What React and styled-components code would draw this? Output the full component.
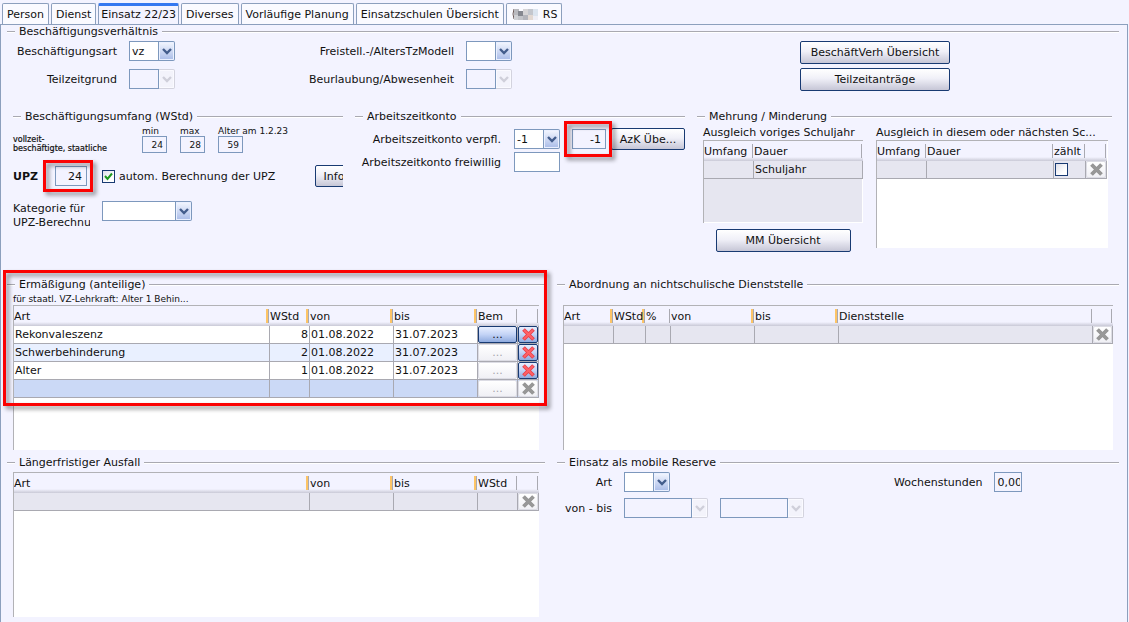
import React from "react";
import styled, { createGlobalStyle, css } from "styled-components";

const c = {
  bg: "#f3f3ff",
  text: "#111111",
  line: "#a9a9b1",
  field: "#7d98bd",
  navy: "#183a72",
  frame: "#8c9fbd",
  idle: "#e6e6f0",
  mark: "#fb0202",
};

const GlobalStyle = createGlobalStyle`
  * { box-sizing: border-box; }
  body {
    margin: 0;
    background: ${c.bg};
    color: ${c.text};
    font: 11px/13px "DejaVu Sans", sans-serif;
  }
  button, input, select { font: inherit; color: inherit; margin: 0; }
`;

const Page = styled.div`
  min-height: 100vh;
  display: flex;
  flex-direction: column;
`;

const TabBar = styled.nav`
  display: flex;
  align-items: stretch;
  gap: 2px;
  height: 21px;
  margin: 3px 2px 0;
`;

const Tab = styled.button`
  display: flex;
  align-items: center;
  gap: 4px;
  padding: 1px 4px 0;
  border: 1px solid ${c.frame};
  border-bottom: 0;
  border-radius: 2px 2px 0 0;
  background: #fafaff;
  white-space: nowrap;
  ${(p) =>
    p.$active &&
    css`
      border-top: 3px solid #3478f0;
      padding: 0 2px 3px;
      background: ${c.bg};
      margin-bottom: -1px;
    `}
`;

const Panel = styled.main`
  flex: 1;
  margin-right: 1px;
  padding: 0 8px 5px 6px;
  border: 1px solid ${c.frame};
  border-bottom: 0;
`;

const Group = styled.fieldset`
  min-width: 0;
  margin: 0;
  padding: 0;
  border: 0;
`;

const Legend = styled.legend`
  display: flex;
  align-items: center;
  gap: 4px;
  width: 100%;
  padding: 0;
  height: 13px;
  white-space: nowrap;
  &::before,
  &::after {
    content: "";
    height: 1px;
    background: ${c.line};
    box-shadow: 0 1px #fff;
  }
  &::before { width: 8px; }
  &::after { flex: 1; }
`;

const Contract = styled.div`
  display: grid;
  grid-template-columns: minmax(0, 787fr) minmax(0, 312fr);
  padding: 3px 7px 0 6px;
`;

const ContractFields = styled.div`
  display: grid;
  grid-template-columns: 104px 46px 267px 46px;
  grid-auto-rows: 20px;
  gap: 8px 12px;
  align-items: center;
`;

const ButtonStack = styled.div`
  display: flex;
  flex-direction: column;
  gap: 4px;
  width: 150px;
`;

const Label = styled.label`
  text-align: right;
  white-space: nowrap;
`;

const PushButton = styled.button`
  height: ${(p) => p.$height || 23}px;
  width: ${(p) => p.$width || "100%"};
  padding: 0;
  border: 1px solid ${c.navy};
  border-radius: 2px;
  background: linear-gradient(#ffffff, #f0f0f8 45%, #c6c6d6);
  white-space: nowrap;
`;

const ComboBox = styled.span`
  display: grid;
  grid-template-columns: 1fr 16px;
  width: ${(p) => p.$width || 46}px;
  height: 20px;
`;

const ComboSelect = styled.select`
  grid-area: 1 / 1 / 2 / 2;
  min-width: 0;
  appearance: none;
  padding: 0 2px;
  border: 1px solid ${c.field};
  border-radius: 0;
  background: #fff;
  opacity: 1;
  &:disabled { background: ${c.bg}; }
`;

const ComboArrow = styled.span`
  display: flex;
  align-items: center;
  justify-content: center;
  pointer-events: none;
  border: 1px solid ${(p) => (p.$off ? "#d3d3de" : c.field)};
  border-left: 0;
  border-radius: 0 2px 2px 0;
  background: ${(p) => (p.$off ? "#f3f3fb" : "linear-gradient(#f4f7ff, #a9bce8)")};
  box-shadow: inset 0 0 0 1px ${(p) => (p.$off ? "#fafaff" : "#eaf0ff")};
  color: ${(p) => (p.$off ? "#cfcfda" : "#435d8c")};
`;

function Combo({ id, value = "", width, disabled, label }) {
  return (
    <ComboBox $width={width}>
      <ComboSelect id={id} disabled={disabled} defaultValue={value} aria-label={label}>
        <option>{value}</option>
      </ComboSelect>
      <ComboArrow $off={disabled}>
        <svg width="10" height="8" viewBox="0 0 10 8" fill="none">
          <path d="M1 2L5 6L9 2" stroke="currentColor" strokeWidth="2.4" />
        </svg>
      </ComboArrow>
    </ComboBox>
  );
}

const TextField = styled.input`
  width: ${(p) => p.$width}px;
  height: ${(p) => (p.$small ? 17 : 20)}px;
  padding: 0 ${(p) => (p.$small ? 3 : 4)}px;
  border: 1px solid ${c.field};
  border-radius: 0;
  outline: 0;
  background: ${(p) => (p.readOnly ? c.bg : "#fff")};
  text-align: right;
  font-size: ${(p) => (p.$small ? 9 : 11)}px;
  ${(p) =>
    p.$left &&
    css`
      padding: 0 1px 0 2px;
      text-align: left;
    `}
`;

const Marked = styled.div`
  position: relative;
  display: ${(p) => (p.$block ? "block" : "flex")};
  &::after {
    content: "";
    position: absolute;
    inset: ${(p) => p.$inset};
    border: 3px solid ${c.mark};
    filter: drop-shadow(3px 3px 2px rgba(0, 0, 0, 0.45));
    pointer-events: none;
  }
`;

const WorkRow = styled.div`
  display: grid;
  grid-template-columns: minmax(0, 330fr) minmax(0, 330fr) minmax(0, 415fr);
  gap: 12px;
  padding: 19px 7px 0 6px;
`;

const Stats = styled.div`
  display: flex;
  align-items: flex-end;
  gap: 13px;
  height: 30px;
`;

const StatusNote = styled.div`
  width: 116px;
  font-size: 8px;
  line-height: 9px;
  white-space: nowrap;
  -webkit-text-stroke: 0.2px;
`;

const Stat = styled.label`
  display: flex;
  flex-direction: column;
  width: 25px;
  font-size: 9px;
  line-height: 10px;
  white-space: nowrap;
`;

const UpzRow = styled.div`
  display: flex;
  align-items: center;
  height: 22px;
  margin-top: 12px;
`;

const UpzLabel = styled.label`
  width: 42px;
  font-weight: bold;
`;

const CheckLabel = styled.label`
  display: flex;
  align-items: center;
  gap: 4px;
  margin-left: 15px;
  white-space: nowrap;
`;

const CheckMark = styled.span`
  display: grid;
  width: 13px;
  height: 13px;
  & > * { grid-area: 1 / 1; }
  & > svg { pointer-events: none; }
`;

const CheckBox = styled.input`
  appearance: none;
  display: block;
  width: 13px;
  height: 13px;
  border: 1px solid ${c.navy};
  background: linear-gradient(135deg, #dfe0ea, #fff 70%);
  & + svg { visibility: hidden; }
  &:checked + svg { visibility: visible; }
`;

function Check(props) {
  return (
    <CheckMark>
      <CheckBox type="checkbox" {...props} />
      <svg width="13" height="13" viewBox="0 0 13 13" fill="none">
        <path d="M3 6L5.500 9L10 3.500" stroke="#1f9a1f" strokeWidth="2" />
      </svg>
    </CheckMark>
  );
}

const Clip = styled.div`
  width: 28px;
  margin-left: auto;
  overflow: hidden;
`;

const CategoryRow = styled.div`
  display: flex;
  gap: 12px;
  margin-top: 14px;
`;

const CategoryLabel = styled.label`
  width: 77px;
  padding-top: 1px;
  overflow: hidden;
  white-space: nowrap;
  line-height: 14px;
`;

const AccountFields = styled.div`
  display: grid;
  grid-template-columns: minmax(0, 1fr) auto auto 74px;
  grid-auto-rows: 22px;
  row-gap: 1px;
  align-items: center;
  padding-top: 5px;
  & > label { padding-right: 13px; }
`;

const AccountMark = styled.div`
  margin: 0 5px 0 12px;
`;

const Balance = styled.div`
  display: grid;
  grid-template-columns: minmax(0, 160fr) minmax(0, 232fr);
  gap: 13px;
  padding: 3px 4px 0 6px;
`;

const BalanceSide = styled.div`
  display: flex;
  flex-direction: column;
  align-items: center;
`;

const Caption = styled.div`
  align-self: stretch;
  height: 14px;
  line-height: 14px;
  white-space: nowrap;
`;

const TablePane = styled.div`
  align-self: stretch;
  min-height: ${(p) => p.$min || 145}px;
  border: solid #b2b2b6;
  border-width: 1px 0 0 1px;
  background: ${(p) => (p.$idle ? c.idle : "#fff")};
  box-shadow: ${(p) => (p.$idle ? "inset -1px -1px #fff" : "none")};
`;

const ButtonGap = styled.div`
  height: 6px;
`;

const Table = styled.table`
  width: 100%;
  table-layout: fixed;
  border-collapse: separate;
  border-spacing: 0;
`;

const HeadRow = styled.tr`
  background: linear-gradient(${c.bg} 80%, #c9c9d6);
`;

const HeadCell = styled.th`
  height: 20px;
  padding: 0;
  font-weight: normal;
  text-align: left;
`;

const HeadText = styled.div`
  height: 14px;
  line-height: 15px;
  border-right: 1px solid ${c.line};
  margin-right: 1px;
  white-space: nowrap;
  overflow: hidden;
  ${(p) =>
    p.$required &&
    css`
      background: linear-gradient(#fdc466, #fdc466) right / 2px 100% no-repeat;
    `}
`;

const rowFill = { plain: "#ffffff", alt: "#e9f0ff", selected: "#cbd9f6", idle: c.idle };

const Row = styled.tr`
  background: ${(p) => rowFill[p.$tone]};
`;

const Cell = styled.td`
  height: 18px;
  padding: ${(p) => (p.$flush ? "0" : "0 1px")};
  border: solid ${c.line};
  border-width: 0 1px 1px 0;
  text-align: ${(p) => p.$align || "left"};
  white-space: nowrap;
  line-height: 13px;
`;

const CellButton = styled.button`
  display: flex;
  align-items: center;
  justify-content: center;
  width: 100%;
  height: 17px;
  padding: 0;
  border: 1px solid ${c.navy};
  border-radius: 2px;
  background: linear-gradient(#e8efff, #c3d3f6 50%, #8fabdf);
  &:disabled {
    border-color: #dcdce4;
    background: linear-gradient(#ffffff, #f0f0f5);
    color: #a6a6ae;
  }
`;

function Cross({ off }) {
  return (
    <svg width="15" height="15" viewBox="0 0 15 15" fill="none">
      <path d="M2.500 2.500L12.500 12.500M12.500 2.500L2.500 12.500" stroke={off ? "#949494" : "#e8404a"} strokeWidth="3.800" />
      <path d="M3 3L12 12M12 3L3 12" stroke={off ? "#989898" : "#ff6166"} strokeWidth="2" />
    </svg>
  );
}

function DeleteButton({ disabled }) {
  return (
    <CellButton type="button" aria-label="Löschen" disabled={disabled}>
      <Cross off={disabled} />
    </CellButton>
  );
}

function DataTable({ columns, children }) {
  return (
    <Table>
      <colgroup>
        {columns.map((col, i) => (
          <col key={i} width={col.width} />
        ))}
      </colgroup>
      <thead>
        <HeadRow>
          {columns.map((col, i) => (
            <HeadCell key={i} scope="col">
              <HeadText $required={col.required}>{col.title}</HeadText>
            </HeadCell>
          ))}
        </HeadRow>
      </thead>
      <tbody>{children}</tbody>
    </Table>
  );
}

function EmptyRow({ count }) {
  return (
    <Row $tone="idle">
      {Array.from({ length: count }, (_, i) => (
        <Cell key={i} />
      ))}
      <Cell $flush>
        <DeleteButton disabled />
      </Cell>
    </Row>
  );
}

const TableRow = styled.div`
  display: grid;
  grid-template-columns: minmax(0, 538fr) minmax(0, 562fr);
  gap: 12px;
  padding-top: ${(p) => p.$top}px;
`;

const TableBody = styled.div`
  padding: ${(p) => p.$top || 3}px 6px 0;
`;

const Note = styled.div`
  height: 12px;
  font-size: 9px;
  line-height: 12px;
`;

const TableInset = styled.div`
  padding-right: 1px;
`;

const Reserve = styled.div`
  display: grid;
  grid-template-columns: minmax(0, 331fr) minmax(0, 219fr);
  padding: 3px 6px 0;
`;

const ReserveFields = styled.div`
  display: grid;
  grid-template-columns: 49px auto;
  gap: 6px 12px;
  align-items: center;
  align-content: start;
  justify-content: start;
`;

const Inline = styled.div`
  display: flex;
  align-items: center;
  gap: 12px;
  height: 20px;
`;

const MosaicIcon = () => (
  <svg width="28" height="13" viewBox="0 0 28 13">
    <path d="M3 1Q1 6 3 11" stroke="#6b5a58" fill="none" />
    <rect x="3" y="1" width="5" height="6" fill="#b9b9be" />
    <rect x="3" y="7" width="5" height="5" fill="#cfd0d4" />
    <rect x="7" y="3" width="5" height="5" fill="#85878f" />
    <rect x="7" y="8" width="5" height="4" fill="#c3c4c9" />
    <rect x="12" y="1" width="5" height="6" fill="#d6d4d6" />
    <rect x="12" y="7" width="5" height="5" fill="#b3b4bb" />
    <rect x="17" y="1" width="5" height="6" fill="#c3c6cd" />
    <rect x="17" y="7" width="5" height="5" fill="#e2d8d2" />
    <rect x="22" y="1" width="5" height="7" fill="#dbe4ef" />
    <rect x="22" y="8" width="5" height="4" fill="#eeeef6" />
  </svg>
);

const tabs = ["Person", "Dienst", "Einsatz 22/23", "Diverses", "Vorläufige Planung", "Einsatzschulen Übersicht"];

const reductions = [
  { kind: "Rekonvaleszenz", hours: 8, from: "01.08.2022", to: "31.07.2023", tone: "plain", note: true },
  { kind: "Schwerbehinderung", hours: 2, from: "01.08.2022", to: "31.07.2023", tone: "alt" },
  { kind: "Alter", hours: 1, from: "01.08.2022", to: "31.07.2023", tone: "plain" },
  { tone: "selected", empty: true },
];

const reductionColumns = [
  { title: "Art", required: true },
  { title: "WStd", width: 40, required: true },
  { title: "von", width: 84, required: true },
  { title: "bis", width: 84, required: true },
  { title: "Bem", width: 40 },
  { title: "", width: 21 },
];

const absenceColumns = [
  { title: "Art", required: true },
  { title: "von", width: 84, required: true },
  { title: "bis", width: 84, required: true },
  { title: "WStd", width: 40 },
  { title: "", width: 21 },
];

const secondmentColumns = [
  { title: "Art", width: 50, required: true },
  { title: "WStd", width: 32, required: true },
  { title: "%", width: 25 },
  { title: "von", width: 84, required: true },
  { title: "bis", width: 84, required: true },
  { title: "Dienststelle" },
  { title: "", width: 20 },
];

export default function App() {
  return (
    <Page>
      <GlobalStyle />
      <TabBar>
        {tabs.map((name) => (
          <Tab key={name} type="button" $active={name === "Einsatz 22/23"}>
            {name}
          </Tab>
        ))}
        <Tab type="button">
          <MosaicIcon />
          RS
        </Tab>
      </TabBar>
      <Panel>
        <Group>
          <Legend>Beschäftigungsverhältnis</Legend>
          <Contract>
            <ContractFields>
              <Label htmlFor="art">Beschäftigungsart</Label>
              <Combo id="art" value="vz" />
              <Label htmlFor="modell">Freistell.-/AltersTzModell</Label>
              <Combo id="modell" />
              <Label htmlFor="grund">Teilzeitgrund</Label>
              <Combo id="grund" disabled />
              <Label htmlFor="urlaub">Beurlaubung/Abwesenheit</Label>
              <Combo id="urlaub" disabled />
            </ContractFields>
            <ButtonStack>
              <PushButton type="button">BeschäftVerh Übersicht</PushButton>
              <PushButton type="button">Teilzeitanträge</PushButton>
            </ButtonStack>
          </Contract>
        </Group>

        <WorkRow>
          <Group>
            <Legend>Beschäftigungsumfang (WStd)</Legend>
            <Stats>
              <StatusNote>
                vollzeit-
                <br />
                beschäftigte, staatliche
              </StatusNote>
              <Stat>
                min
                <TextField $small $width={25} readOnly value="24" />
              </Stat>
              <Stat>
                max
                <TextField $small $width={25} readOnly value="28" />
              </Stat>
              <Stat>
                Alter am 1.2.23
                <TextField $small $width={25} readOnly value="59" />
              </Stat>
            </Stats>
            <UpzRow>
              <UpzLabel htmlFor="upz">UPZ</UpzLabel>
              <Marked $inset="-6px -6px -6px -12px">
                <TextField id="upz" $width={32} readOnly value="24" />
              </Marked>
              <CheckLabel>
                <Check defaultChecked />
                autom. Berechnung der UPZ
              </CheckLabel>
              <Clip>
                <PushButton type="button" $height={22} $width="38px">
                  Info
                </PushButton>
              </Clip>
            </UpzRow>
            <CategoryRow>
              <CategoryLabel htmlFor="kategorie">
                Kategorie für
                <br />
                UPZ-Berechnung
              </CategoryLabel>
              <Combo id="kategorie" width={90} />
            </CategoryRow>
          </Group>

          <Group>
            <Legend>Arbeitszeitkonto</Legend>
            <AccountFields>
              <Label htmlFor="pflicht">Arbeitszeitkonto verpfl.</Label>
              <Combo id="pflicht" value="-1" />
              <AccountMark>
                <Marked $inset="-8px -6px -8px -8px">
                  <TextField $width={34} readOnly value="-1" aria-label="Arbeitszeitkonto Stand" />
                </Marked>
              </AccountMark>
              <PushButton type="button" $height={22}>
                AzK Übe...
              </PushButton>
              <Label htmlFor="freiwillig">Arbeitszeitkonto freiwillig</Label>
              <TextField id="freiwillig" $width={46} defaultValue="" />
            </AccountFields>
          </Group>

          <Group>
            <Legend>Mehrung / Minderung</Legend>
            <Balance>
              <BalanceSide>
                <Caption>Ausgleich voriges Schuljahr</Caption>
                <TablePane $min={83} $idle>
                  <DataTable columns={[{ title: "Umfang", width: 50 }, { title: "Dauer" }]}>
                    <Row $tone="idle">
                      <Cell />
                      <Cell>Schuljahr</Cell>
                    </Row>
                  </DataTable>
                </TablePane>
                <ButtonGap />
                <PushButton type="button" $width="135px">
                  MM Übersicht
                </PushButton>
              </BalanceSide>
              <BalanceSide>
                <Caption>Ausgleich in diesem oder nächsten Sc...</Caption>
                <TablePane $min={108}>
                  <TableInset>
                    <DataTable
                      columns={[
                        { title: "Umfang", width: 50 },
                        { title: "Dauer" },
                        { title: "zählt", width: 32 },
                        { title: "", width: 21 },
                      ]}
                    >
                      <Row $tone="idle">
                        <Cell />
                        <Cell />
                        <Cell>
                          <Check aria-label="zählt" />
                        </Cell>
                        <Cell $flush>
                          <DeleteButton disabled />
                        </Cell>
                      </Row>
                    </DataTable>
                  </TableInset>
                </TablePane>
              </BalanceSide>
            </Balance>
          </Group>
        </WorkRow>

        <TableRow $top={26}>
          <Marked $block $inset="-8px -2px 44px -4px">
            <Group>
              <Legend>Ermäßigung (anteilige)</Legend>
              <TableBody $top={2}>
                <Note>für staatl. VZ-Lehrkraft: Alter 1 Behin...</Note>
                <TablePane>
                  <DataTable columns={reductionColumns}>
                    {reductions.map((r, i) => (
                      <Row key={i} $tone={r.tone}>
                        <Cell>{r.kind}</Cell>
                        <Cell $align="right">{r.hours}</Cell>
                        <Cell>{r.from}</Cell>
                        <Cell>{r.to}</Cell>
                        <Cell $flush>
                          <CellButton type="button" disabled={!r.note}>
                            ...
                          </CellButton>
                        </Cell>
                        <Cell $flush>
                          <DeleteButton disabled={r.empty} />
                        </Cell>
                      </Row>
                    ))}
                  </DataTable>
                </TablePane>
              </TableBody>
            </Group>
          </Marked>
          <Group>
            <Legend>Abordnung an nichtschulische Dienststelle</Legend>
            <TableBody $top={14}>
              <TablePane>
                <DataTable columns={secondmentColumns}>
                  <EmptyRow count={6} />
                </DataTable>
              </TablePane>
            </TableBody>
          </Group>
        </TableRow>

        <TableRow $top={6}>
          <Group>
            <Legend>Längerfristiger Ausfall</Legend>
            <TableBody>
              <TablePane>
                <DataTable columns={absenceColumns}>
                  <EmptyRow count={4} />
                </DataTable>
              </TablePane>
            </TableBody>
          </Group>
          <Group>
            <Legend>Einsatz als mobile Reserve</Legend>
            <Reserve>
              <ReserveFields>
                <Label htmlFor="reserve">Art</Label>
                <Combo id="reserve" />
                <Label htmlFor="von">von - bis</Label>
                <Inline>
                  <Combo id="von" width={84} disabled />
                  <Combo width={84} disabled label="bis" />
                </Inline>
              </ReserveFields>
              <Inline>
                <Label htmlFor="stunden">Wochenstunden</Label>
                <TextField id="stunden" $width={28} $left readOnly value="0,00" />
              </Inline>
            </Reserve>
          </Group>
        </TableRow>
      </Panel>
    </Page>
  );
}
